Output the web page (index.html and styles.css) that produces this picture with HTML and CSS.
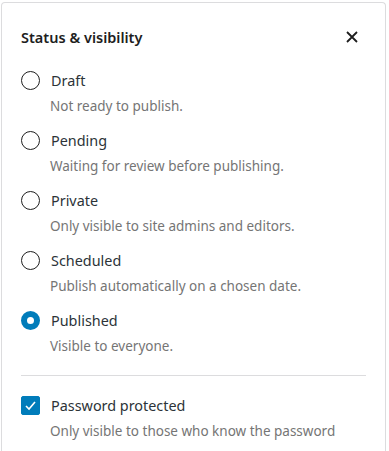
FILE: index.html
```html
<!DOCTYPE html>
<html lang="en">
<head>
    <meta charset="UTF-8">
    <meta name="viewport" content="width=device-width, initial-scale=1.0">
    <title>Status & visibility</title>
    <link rel="stylesheet" href="styles.css">
</head>
<body>
    <div class="panel">
        <div class="panel-header">
            <h2>Status &amp; visibility</h2>
            <button class="close-button" aria-label="Close">
                <svg width="12" height="12" viewBox="0 0 12 12">
                    <path d="M1 1 L11 11 M11 1 L1 11" stroke="#1e1e1e" stroke-width="1.8" fill="none"/>
                </svg>
            </button>
        </div>

        <!-- Post status -->
        <div class="status-list">
            <label class="option">
                <span class="option-row">
                    <input type="radio" name="status" value="draft">
                    <span class="option-label">Draft</span>
                </span>
                <span class="option-help">Not ready to publish.</span>
            </label>
            <label class="option">
                <span class="option-row">
                    <input type="radio" name="status" value="pending">
                    <span class="option-label">Pending</span>
                </span>
                <span class="option-help">Waiting for review before publishing.</span>
            </label>
            <label class="option">
                <span class="option-row">
                    <input type="radio" name="status" value="private">
                    <span class="option-label">Private</span>
                </span>
                <span class="option-help">Only visible to site admins and editors.</span>
            </label>
            <label class="option">
                <span class="option-row">
                    <input type="radio" name="status" value="future">
                    <span class="option-label">Scheduled</span>
                </span>
                <span class="option-help">Publish automatically on a chosen date.</span>
            </label>
            <label class="option">
                <span class="option-row">
                    <input type="radio" name="status" value="publish" checked>
                    <span class="option-label">Published</span>
                </span>
                <span class="option-help">Visible to everyone.</span>
            </label>
        </div>

        <hr class="divider">

        <!-- Password -->
        <label class="option">
            <span class="option-row">
                <input type="checkbox" checked>
                <span class="option-label">Password protected</span>
            </span>
            <span class="option-help">Only visible to those who know the password</span>
        </label>
    </div>
</body>
</html>
```

FILE: styles.css
```css
body {
    font-family: 'Noto Sans', sans-serif;
    background-color: white;
    margin: 0;
    padding: 0;
}

.panel {
    box-sizing: border-box;
    width: 385px;
    height: 460px;
    margin: 2px 0 0 1px;
    padding: 0 19px;
    border: 1px solid #dcdcde;
    border-bottom: none;
    border-radius: 4px 4px 0 0;
    background: white;
}

.panel-header {
    display: flex;
    align-items: center;
    justify-content: space-between;
    padding-top: 22px;
    margin-bottom: 19px;
}

.panel-header h2 {
    margin: 0;
    font-size: 14.5px;
    line-height: 24px;
    font-weight: 600;
    color: #1e1e1e;
}

.close-button {
    display: flex;
    padding: 0;
    margin-right: 8px;
    border: none;
    background: none;
    cursor: pointer;
}

.status-list {
    display: flex;
    flex-direction: column;
    gap: 12px;
}

.option {
    display: flex;
    flex-direction: column;
    cursor: pointer;
}

.option-row {
    display: flex;
    align-items: center;
    gap: 11px;
    height: 24px;
}

.option-label {
    font-size: 14.4px;
    color: #2c3338;
}

.option-help {
    margin-top: 4px;
    padding-left: 29px;
    font-size: 13.5px;
    line-height: 20px;
    color: #757575;
}

.option input {
    appearance: none;
    box-sizing: border-box;
    width: 19px;
    height: 19px;
    margin: 0;
    flex-shrink: 0;
    border: 1.5px solid #1e1e1e;
    background: white;
}

.option input[type="radio"] {
    border-radius: 50%;
}

.option input[type="radio"]:checked {
    border: 6px solid #007cba;
}

.option input[type="checkbox"] {
    border-radius: 2px;
}

.option input[type="checkbox"]:checked {
    border-color: #007cba;
    background: #007cba url("data:image/svg+xml,%3Csvg xmlns='http://www.w3.org/2000/svg' viewBox='0 0 19 19'%3E%3Cpath d='M5 10 L8 13 L14 6' stroke='white' stroke-width='1.6' fill='none'/%3E%3C/svg%3E") center / 19px 19px no-repeat;
}

.divider {
    margin: 19px 0 17px;
    border: none;
    border-top: 1px solid #dcdcde;
}
```
